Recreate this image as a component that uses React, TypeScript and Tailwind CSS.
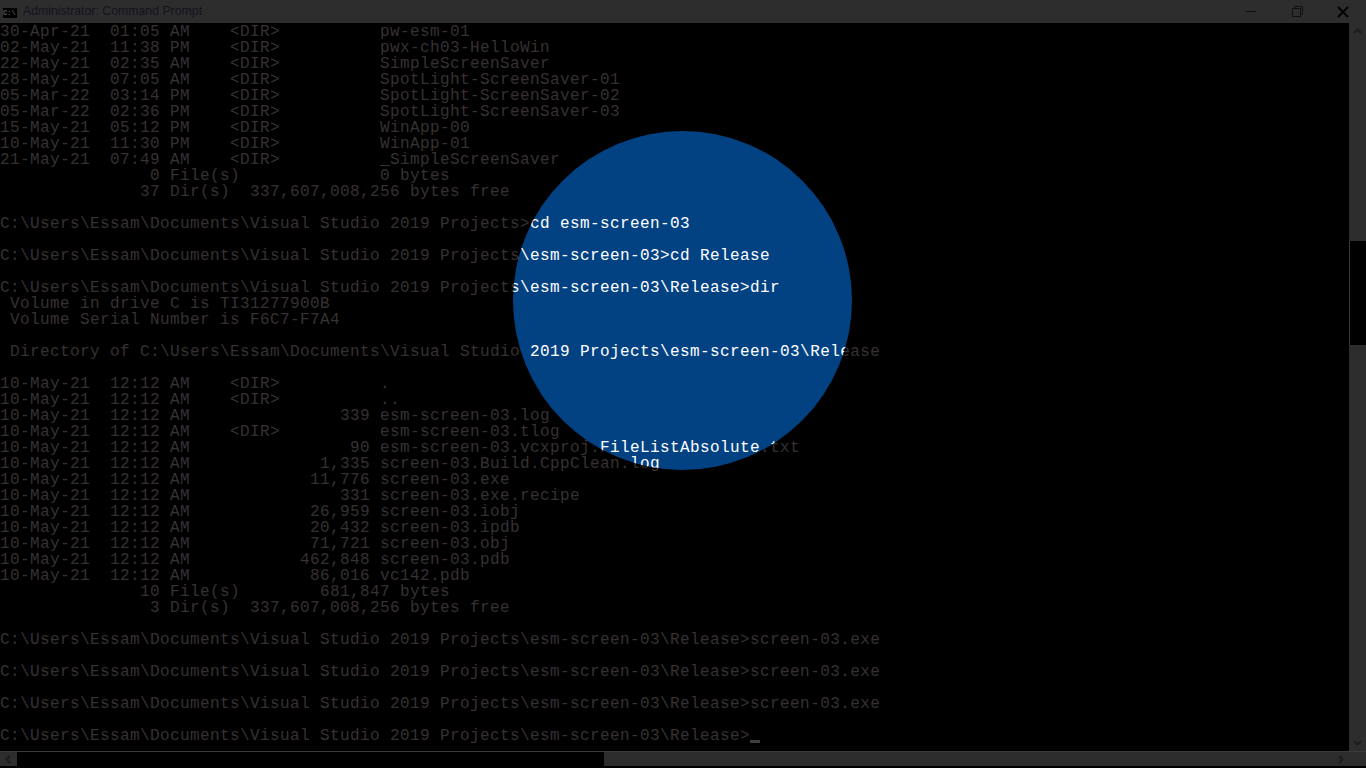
import { ReactNode } from 'react';

const base = 'C:\\Users\\Essam\\Documents\\Visual Studio 2019 Projects';
const rel = `${base}\\esm-screen-03\\Release>`;

const dir = (date: string, time: string, name: string) =>
  `${date}  ${time}    <DIR>          ${name}`;
const file = (size: string, name: string) =>
  `10-May-21  12:12 AM    ${size.padStart(14, ' ')} ${name}`;

const lines = [
  dir('30-Apr-21', '01:05 AM', 'pw-esm-01'),
  dir('02-May-21', '11:38 PM', 'pwx-ch03-HelloWin'),
  dir('22-May-21', '02:35 AM', 'SimpleScreenSaver'),
  dir('28-May-21', '07:05 AM', 'SpotLight-ScreenSaver-01'),
  dir('05-Mar-22', '03:14 PM', 'SpotLight-ScreenSaver-02'),
  dir('05-Mar-22', '02:36 PM', 'SpotLight-ScreenSaver-03'),
  dir('15-May-21', '05:12 PM', 'WinApp-00'),
  dir('10-May-21', '11:30 PM', 'WinApp-01'),
  dir('21-May-21', '07:49 AM', '_SimpleScreenSaver'),
  '               0 File(s)              0 bytes',
  '              37 Dir(s)  337,607,008,256 bytes free',
  '',
  `${base}>cd esm-screen-03`,
  '',
  `${base}\\esm-screen-03>cd Release`,
  '',
  `${rel}dir`,
  ' Volume in drive C is TI31277900B',
  ' Volume Serial Number is F6C7-F7A4',
  '',
  ` Directory of ${base}\\esm-screen-03\\Release`,
  '',
  dir('10-May-21', '12:12 AM', '.'),
  dir('10-May-21', '12:12 AM', '..'),
  file('339', 'esm-screen-03.log'),
  dir('10-May-21', '12:12 AM', 'esm-screen-03.tlog'),
  file('90', 'esm-screen-03.vcxproj.FileListAbsolute.txt'),
  file('1,335', 'screen-03.Build.CppClean.log'),
  file('11,776', 'screen-03.exe'),
  file('331', 'screen-03.exe.recipe'),
  file('26,959', 'screen-03.iobj'),
  file('20,432', 'screen-03.ipdb'),
  file('71,721', 'screen-03.obj'),
  file('462,848', 'screen-03.pdb'),
  file('86,016', 'vc142.pdb'),
  '              10 File(s)        681,847 bytes',
  '               3 Dir(s)  337,607,008,256 bytes free',
  '',
  `${rel}screen-03.exe`,
  '',
  `${rel}screen-03.exe`,
  '',
  `${rel}screen-03.exe`,
  '',
  rel,
];

const Console = ({ className }: { className: string }) => (
  <div className={`w-[1349px] pt-px font-['Liberation_Mono',monospace] text-[16px] leading-[16px] tracking-[0.4px] whitespace-pre ${className}`}>
    {lines.map((line, i) => (
      <div key={i} className="h-4">
        {line}
      </div>
    ))}
  </div>
);

const Arrow = ({ d, className }: { d: string; className?: string }) => (
  <svg width="9" height="9" viewBox="0 0 9 9" fill="none" stroke="#1d1d1d" strokeWidth="2" className={className}>
    <path d={d} />
  </svg>
);

const TitleButton = ({ children }: { children: ReactNode }) => (
  <div className="w-[46px] h-full flex items-center justify-center">{children}</div>
);

export default function App() {
  return (
    <div className="relative w-[1366px] h-[768px] bg-black overflow-hidden flex flex-col">
      {/* title bar */}
      <div className="h-[23px] shrink-0 bg-[#2d2d2d] flex items-center">
        <div className="ml-[3px] mt-[2px] w-[14px] h-[10px] bg-black text-[7px] leading-[10px] text-[#5a5a5a] font-['Liberation_Mono',monospace] font-bold overflow-hidden">
          C:\
        </div>
        <span className="ml-[6px] font-['Liberation_Sans',sans-serif] text-[12.3px] text-[#15121f]">
          Administrator: Command Prompt
        </span>
        <div className="ml-auto flex h-full">
          <TitleButton>
            <div className="w-[10px] h-px bg-[#111]" />
          </TitleButton>
          <TitleButton>
            <svg width="11" height="11" viewBox="0 0 11 11" fill="none" stroke="#111">
              <path d="M2.5 2.5V.5h8v8h-2" />
              <rect x=".5" y="2.5" width="8" height="8" />
            </svg>
          </TitleButton>
          <TitleButton>
            <svg width="12" height="12" viewBox="0 0 12 12" fill="none" stroke="#000" strokeWidth="1.8">
              <path d="M1 1l10 10M11 1L1 11" />
            </svg>
          </TitleButton>
        </div>
      </div>

      <div className="flex h-[728px] shrink-0">
        <Console className="text-[#373133]" />
        {/* vertical scrollbar */}
        <div className="w-[17px] shrink-0 bg-[#2d2d2d] flex flex-col items-center">
          <Arrow d="M1 6l3.5-3.5L8 6" className="my-1" />
          <div className="h-[201px]" />
          <div className="w-full h-[104px] bg-black border-l border-[#3a3a3a]" />
          <div className="flex-1" />
          <Arrow d="M1 3l3.5 3.5L8 3" className="my-1" />
        </div>
      </div>

      {/* horizontal scrollbar */}
      <div className="h-[15px] shrink-0 bg-[#2d2d2d] border-t border-[#3a3a3a] flex items-center">
        <div className="w-[17px] flex justify-center">
          <Arrow d="M6 1L2.5 4.5 6 8" />
        </div>
        <div className="w-[587px] h-full bg-black" />
        <div className="flex-1" />
        <div className="w-[17px] mr-[17px] flex justify-center">
          <Arrow d="M3 1l3.5 3.5L3 8" />
        </div>
      </div>

      {/* cursor */}
      <div className="absolute left-[750px] top-[740px] w-[10px] h-[3px] bg-[#3d3d3d]" />

      {/* spotlight */}
      <div className="absolute left-[513px] top-[131px] w-[339px] h-[339px] rounded-full bg-[#024283] overflow-hidden">
        <div className="absolute left-[-513px] top-[-108px]">
          <Console className="text-white" />
        </div>
      </div>
    </div>
  );
}
